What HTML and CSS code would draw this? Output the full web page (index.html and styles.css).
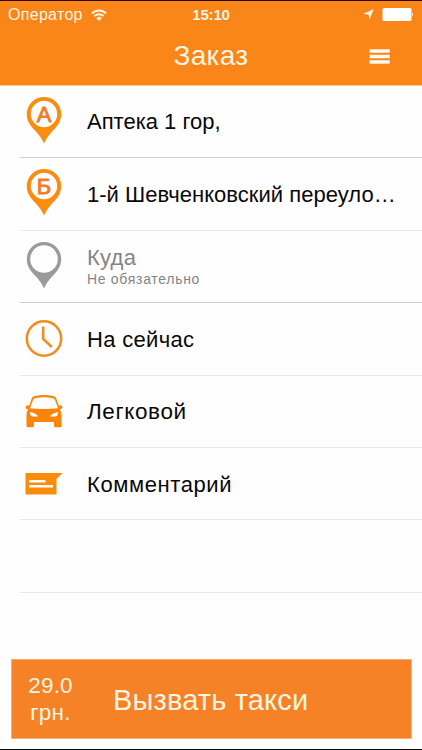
FILE: index.html
```html
<!DOCTYPE html>
<html lang="ru">
<head>
<meta charset="utf-8">
<title>Заказ</title>
<link rel="stylesheet" href="styles.css">
</head>
<body>
<main class="screen">
  <header class="header">
    <div class="status">
      <div class="carrier">
        <span class="carrier-name">Оператор</span>
        <svg class="wifi" width="16" height="12" viewBox="0 0 16 12"><g fill="none" stroke="#fff5e0" stroke-width="1.9"><path d="M.9 4.5a10 10 0 0 1 14.2 0"/><path d="M3.4 7.2a6.5 6.5 0 0 1 9.2 0"/></g><path d="M5.2 9.2a4 4 0 0 1 5.6 0L8 12z" fill="#fff5e0"/></svg>
      </div>
      <time class="clock">15:10</time>
      <div class="indicators">
        <svg width="11" height="11" viewBox="0 0 11 11"><path d="M10.8 0L6.4 10.8L5.5 5.5L0 4.9z" fill="#fff5e0"/></svg>
        <svg width="32" height="13" viewBox="0 0 32 13"><rect x=".5" width="29" height="13" rx="1.5" fill="#fff"/><path d="M30.3 4.5q1.8 2 0 4z" fill="#fff"/></svg>
      </div>
    </div>
    <div class="navbar">
      <h1 class="title">Заказ</h1>
      <svg class="menu" width="21" height="15" viewBox="0 0 21 15"><path d="M.5 .3H20.7v3.5H.5zM.5 5.8H20.7v3.4H.5zM.5 11.3H20.7v3.4H.5z" fill="#fff8ed"/></svg>
    </div>
  </header>
  <section class="list">
    <div class="row strong">
      <svg class="icon pin" width="38" height="48" viewBox="0 0 38 48"><path fill="#fb8c0e" fill-rule="evenodd" d="M19 0A17.2 17.2 0 0 0 1.8 17.2C1.8 24 5.5 29 9.5 33Q16 39.5 19 46.5Q22 39.5 28.5 33C32.5 29 36.2 24 36.2 17.2A17.2 17.2 0 0 0 19 0zM19 3.8a13.2 13.2 0 1 1 0 26.4a13.2 13.2 0 0 1 0-26.4z"/><text class="pin-letter" x="19" y="25">А</text></svg>
      <span class="label address-a">Аптека 1 гор,</span>
    </div>
    <div class="row">
      <svg class="icon pin" width="38" height="48" viewBox="0 0 38 48"><path fill="#fb8c0e" fill-rule="evenodd" d="M19 0A17.2 17.2 0 0 0 1.8 17.2C1.8 24 5.5 29 9.5 33Q16 39.5 19 46.5Q22 39.5 28.5 33C32.5 29 36.2 24 36.2 17.2A17.2 17.2 0 0 0 19 0zM19 3.8a13.2 13.2 0 1 1 0 26.4a13.2 13.2 0 0 1 0-26.4z"/><text class="pin-letter" x="19" y="25">Б</text></svg>
      <span class="label address-b">1-й Шевченковский переуло…</span>
    </div>
    <div class="row strong">
      <svg class="icon pin" width="38" height="48" viewBox="0 0 38 48"><path fill="#9b9b9b" fill-rule="evenodd" d="M19 0A17.2 17.2 0 0 0 1.8 17.2C1.8 24 5.5 29 9.5 33Q16 39.5 19 46.5Q22 39.5 28.5 33C32.5 29 36.2 24 36.2 17.2A17.2 17.2 0 0 0 19 0zM19 3.2a13.8 13.8 0 1 1 0 27.6a13.8 13.8 0 0 1 0-27.6z"/></svg>
      <div class="stack"><span class="label muted">Куда</span><span class="hint">Не обязательно</span></div>
    </div>
    <div class="row">
      <svg class="icon" width="38" height="38" viewBox="0 0 38 38"><circle cx="19" cy="18.5" r="17.2" fill="none" stroke="#f28c1e" stroke-width="2.5"/><path d="M18.2 6.5V19L26.8 27" fill="none" stroke="#f28c1e" stroke-width="2.5"/></svg>
      <span class="label now">На сейчас</span>
    </div>
    <div class="row">
      <svg class="icon" width="38" height="34" viewBox="0 0 38 34"><path fill="#fb8508" fill-rule="evenodd" d="M9.5 1Q19-1 28.5 1Q30.5 1.5 31.3 3.5L33.7 10.4Q37.5 9.7 37.5 12.2Q37.3 14.2 34.8 14.2Q36.5 16.7 36.5 19.7V30.8Q36.5 32.3 35 32.3H30.5Q29 32.3 29 30.8V27H9V30.8Q9 32.3 7.5 32.3H3Q1.5 32.3 1.5 30.8V19.7Q1.5 16.7 3.2 14.2Q.5 14.2 .5 12.2Q.7 9.7 4.3 10.4L6.7 3.5Q7.5 1.5 9.5 1zM10 3.2Q8.5 3.6 8 5.1L5 13.2Q19 14.8 33 13.2L30 5.1Q29.5 3.6 28 3.2Q19 1.2 10 3.2zM5 17Q5 21.5 8 21.5H13Q11.5 18.3 5 17zM33 17Q26.5 18.3 25 21.5H30Q33 21.5 33 17z"/></svg>
      <span class="label car">Легковой</span>
    </div>
    <div class="row">
      <svg class="icon" width="38" height="22" viewBox="0 0 38 22"><path fill="#fb8b0b" d="M.5 0H37.5L31.5 6V21.5H.5z"/><path d="M4 8.2H20.5M4 13.3H28" stroke="#fff" stroke-width="2.6"/></svg>
      <span class="label comment">Комментарий</span>
    </div>
    <div class="row"></div>
    <div class="row"></div>
  </section>
  <button class="order"><span class="price"><span class="amount">29.0</span><span class="currency">грн.</span></span><span class="call">Вызвать такси</span></button>
</main>
</body>
</html>
```
FILE: styles.css
```css
* { box-sizing: border-box; }
body { margin: 0; background: #fff; font-family: "Liberation Sans", Arial, sans-serif; }
.screen { width: 422px; height: 750px; display: flex; flex-direction: column; background: #fefefe; border-bottom: 1px solid #111; overflow: hidden; }
.header { height: 86px; flex: none; background: #fa8519; border-top: 1px solid #2a0800; border-bottom: 1px solid #ffc590; color: #fff5e0; }
.status { height: 27px; display: grid; grid-template-columns: 1fr auto 1fr; align-items: center; padding: 0 8px; }
.carrier { display: flex; align-items: center; gap: 8.5px; }
.carrier-name { font-size: 16px; letter-spacing: .3px; }
.clock { font-size: 15px; font-weight: 700; letter-spacing: -.2px; }
.indicators { display: flex; justify-content: flex-end; align-items: center; gap: 8px; }
.navbar { height: 56px; display: grid; grid-template-columns: 1fr auto 1fr; align-items: center; }
.title { grid-column: 2; margin: 0; font-size: 28px; line-height: 32px; font-weight: 400; letter-spacing: .3px; }
.menu { justify-self: end; margin-right: 32px; }
.list { flex: none; height: 507px; margin-left: 20px; display: grid; grid-template-rows: 72px 73px 72px 73px 72px 72px 73px; grid-auto-rows: 0; }
.row { display: flex; align-items: center; gap: 24.4px; padding-left: 4.6px; border-bottom: 1px solid #eaeaea; }
.row.strong { border-color: #d0d0d0; }
.row:last-child { display: none; }
.icon { flex: none; }
.pin { margin-top: -2px; }
.pin-letter { font-size: 22px; font-weight: 400; text-anchor: middle; fill: #ef7d27; stroke: #ef7d27; stroke-width: .9px; }
.label { font-size: 22px; line-height: 26px; color: #080808; white-space: nowrap; }
.now { letter-spacing: .32px; padding-top: 1px; }
.car { font-size: 22.5px; letter-spacing: .6px; padding-top: 1px; }
.comment { letter-spacing: .6px; padding-top: 2px; }
.address-b { padding-top: 1px; letter-spacing: .03px; }
.stack { display: flex; flex-direction: column; margin-top: -2px; }
.muted { color: #858585; letter-spacing: .25px; }
.hint { font-size: 14px; line-height: 16px; color: #858585; letter-spacing: .7px; }
.order { height: 80px; margin: 66px 10px 0 11px; padding: 0; flex: none; display: flex; align-items: center; border: 1px solid #f8ae6e; background: #f58227; color: #fff5e0; font-family: inherit; }
.price { width: 77px; display: flex; flex-direction: column; align-items: center; font-size: 22.5px; line-height: 27px; }
.amount { letter-spacing: .2px; }
.currency { letter-spacing: .3px; }
.call { margin-left: 24px; font-size: 29px; line-height: 34px; letter-spacing: .15px; padding-top: 1px; }
```
